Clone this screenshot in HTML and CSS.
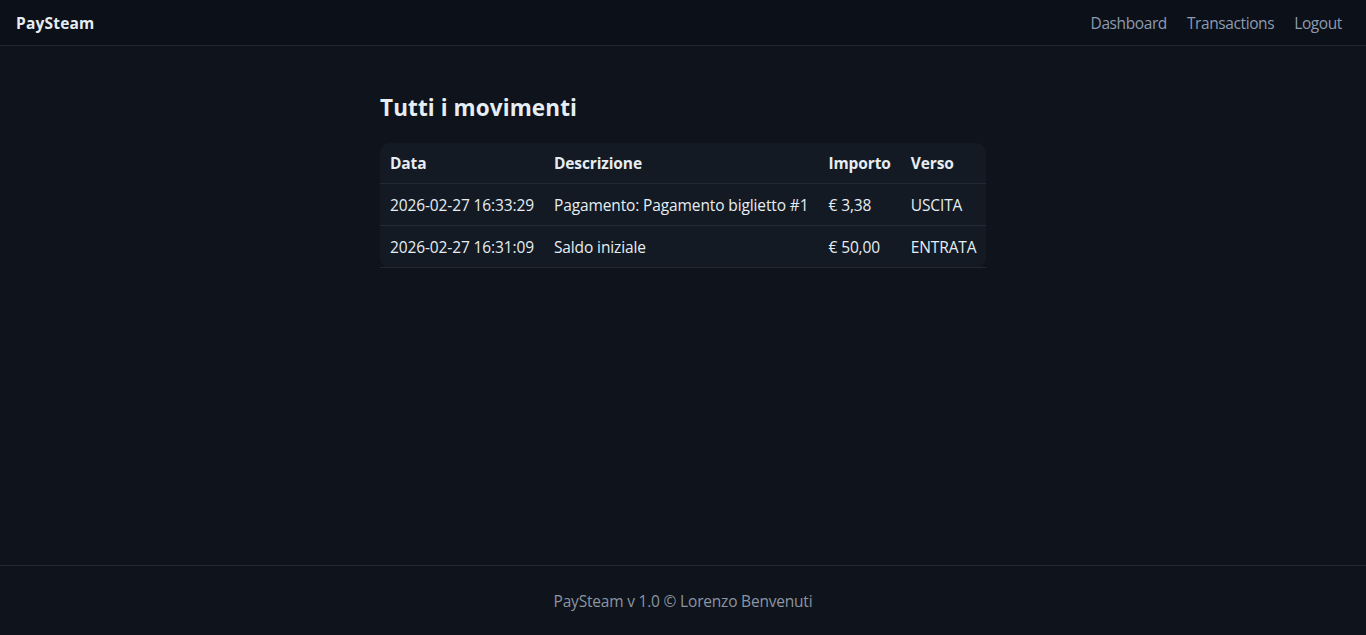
FILE: index.html
```html
<!DOCTYPE html>
<html lang="it">
<head>
  <meta charset="UTF-8">
  <meta name="viewport" content="width=device-width, initial-scale=1.0">
  <title>PaySteam - Movimenti</title>
  <link rel="stylesheet" href="styles.css">
</head>
<body>
  <nav class="navbar">
    <a class="brand" href="#">PaySteam</a>
    <div class="nav-links">
      <a href="#">Dashboard</a>
      <a href="#">Transactions</a>
      <a href="#">Logout</a>
    </div>
  </nav>

  <main class="content">
    <h2>Tutti i movimenti</h2>
    <table class="movements">
      <thead>
        <tr>
          <th>Data</th>
          <th>Descrizione</th>
          <th>Importo</th>
          <th>Verso</th>
        </tr>
      </thead>
      <tbody>
        <tr>
          <td>2026-02-27 16:33:29</td>
          <td>Pagamento: Pagamento biglietto #1</td>
          <td>€ 3,38</td>
          <td>USCITA</td>
        </tr>
        <tr>
          <td>2026-02-27 16:31:09</td>
          <td>Saldo iniziale</td>
          <td>€ 50,00</td>
          <td>ENTRATA</td>
        </tr>
      </tbody>
    </table>
  </main>

  <footer class="footer">
    PaySteam v 1.0 © Lorenzo Benvenuti
  </footer>
</body>
</html>
```

FILE: styles.css
```css
html, body {
  height: 100%;
}
body {
  font-family: "Open Sans", "Noto Sans", sans-serif;
  font-size: 16px;
  margin: 0;
  background: #0f131b;
  color: #e6edf3;
  display: flex;
  flex-direction: column;
}
a {
  text-decoration: none;
}
.navbar {
  height: 45px;
  display: flex;
  align-items: center;
  justify-content: space-between;
  padding: 0 24px 0 16px;
  background: #0c1018;
  border-bottom: 1px solid #222831;
}
.brand {
  color: #e6edf3;
  font-weight: 700;
  font-size: 15.5px;
  letter-spacing: 0.2px;
}
.nav-links {
  display: flex;
  gap: 20px;
}
.nav-links a {
  color: #8d9bb0;
  font-size: 15.5px;
  letter-spacing: -0.4px;
}
.content {
  flex: 1;
  width: 606px;
  margin: 0 auto;
  padding-top: 46px;
}
h2 {
  font-size: 22.5px;
  font-weight: 700;
  margin: 0 0 20px;
  letter-spacing: 0.1px;
}
.movements {
  border-collapse: collapse;
  background: #131a23;
  border-radius: 10px;
  font-size: 15.5px;
  letter-spacing: -0.12px;
}
.movements th,
.movements td {
  padding: 0 10px;
  height: 41px;
  text-align: left;
  white-space: nowrap;
  border-bottom: 1px solid #212a35;
}
.movements th {
  height: 40px;
  font-weight: 700;
}
.footer {
  height: 69px;
  display: flex;
  align-items: center;
  justify-content: center;
  border-top: 1px solid #222831;
  background: #0f131b;
  color: #8b95a3;
  font-size: 15.5px;
  letter-spacing: -0.2px;
}
```
